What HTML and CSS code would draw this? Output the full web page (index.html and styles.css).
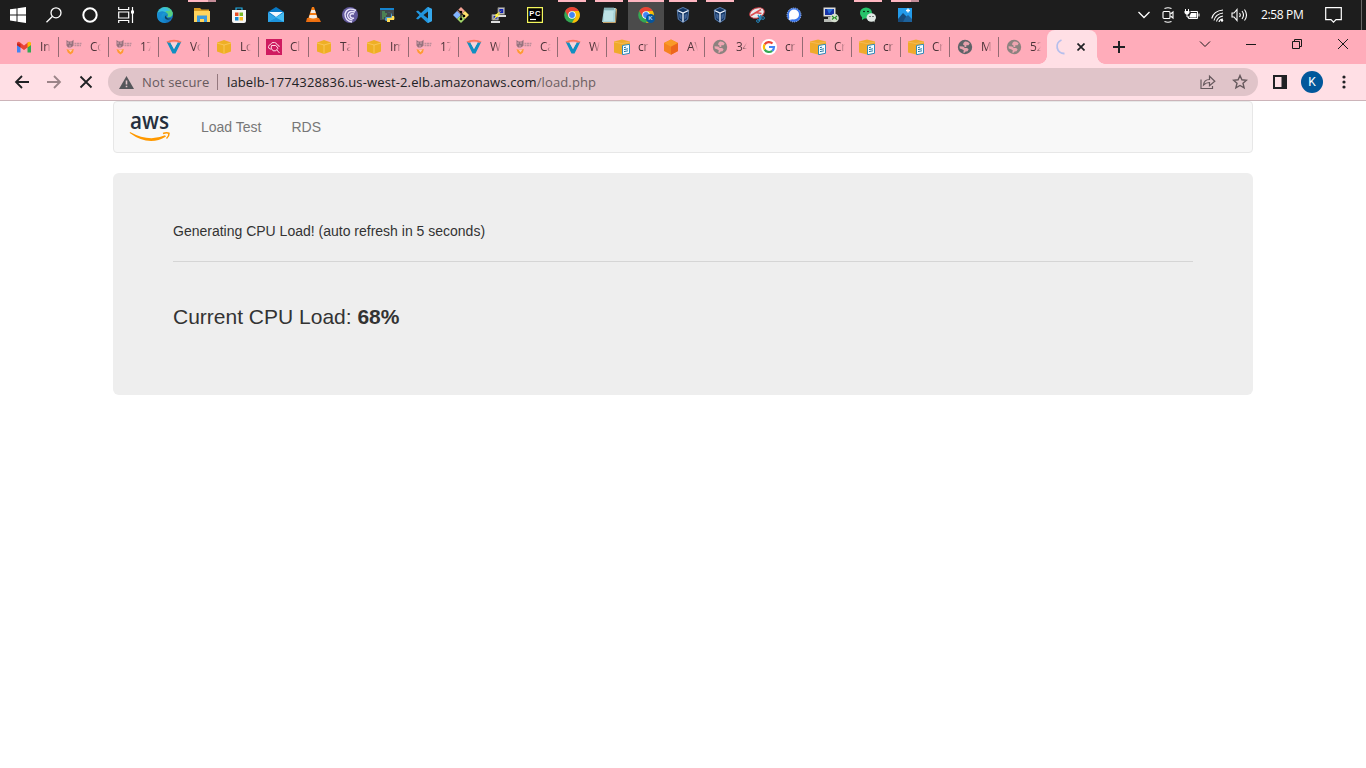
FILE: index.html
```html
<!DOCTYPE html>
<html lang="en">
<head>
<meta charset="utf-8">
<title>Load Test</title>
<link rel="stylesheet" href="styles.css">
</head>
<body>
<svg class="sprite" aria-hidden="true">
  <symbol id="gmail" viewBox="0 0 16 16"><path d="M1 4v9.500h3.500V7z" fill="#4285f4"/><path d="M15 4v9.500h-3.500V7z" fill="#34a853"/><path d="M1 4.200Q1.200 2 3.500 3L8 6.500 12.500 3 15 4v2L8 11 1 6z" fill="#ea4335"/><path d="M11.500 3.800c1.500-2 3.500-1 3.500.8v1.500l-3.500 2.500z" fill="#fbbc04"/><path d="M1 4.600v1.700l3.500 2.300V5z" fill="#c5221f"/></symbol>
  <symbol id="fox" viewBox="0 0 16 16"><g opacity=".75"><path d="M.5 1l2 1.500h3L7.500.8v6L5 8.500H2L.5 6.500z" fill="#74606b"/><path d="M2 3v2M5 3v2M3 7h2" stroke="#c6a3ae"/><path d="M8.500 4.500H16M8.500 6.500h6.500" stroke="#a98590" stroke-width="1.500" stroke-dasharray="2 .5"/></g><path d="M.5 10l1.700.8h3.200l2.400-.8-.8 3.500-2.500 2-2.700-2z" fill="#ff9a32"/><path d="M2.700 11h3.500l-1.700 2.200z" fill="#ffcdb1"/></symbol>
  <symbol id="vee" viewBox="0 0 16 16"><path d="M.8 3l3.700.5L8 10l3.500-6.500 3.700-.5-5.700 11.500h-3z" fill="#118fc1"/><path d="M4.300 3.500h7.400L8 10z" fill="#f3d5da"/><path d="M.2 2.700q7.800-3.700 15.600 0l-2.500 1q-5-2.300-10.600 0z" fill="#fa765d"/></symbol>
  <symbol id="cube" viewBox="0 0 16 16"><path d="M1 3.500L8 1l7 2.500v9L8 15l-7-2.500z" fill="#efaf25"/><path d="M1 4l7 2 7-2M8 6v9" fill="none" stroke="#ffd477" stroke-width=".6"/></symbol>
  <symbol id="cubedoc" viewBox="0 0 16 16"><path d="M0 2.500L8 .5l8 2v11L8 15.500l-8-2z" fill="#efaa2b"/><path d="M0 3l8 1.500L16 3" stroke="#f7c266" fill="none" stroke-width=".7"/><path d="M8.500 6.500l7-1.200v9L8.500 15.700z" fill="#f5fbff" stroke="#2f8bba"/><path d="M10 8.600l2-.4M10 10.600l4-.8M10 12.600l4-.8" stroke="#2477a4"/></symbol>
  <symbol id="cloud9" viewBox="0 0 16 16"><path d="M0 0h16v16H0z" fill="#cf1b60"/><path d="M5.500 10H4.200Q2 9.500 2.500 7.500 2.700 6 4.200 5.800 5.500 2.800 8.500 3.500q2.200.3 2.600 2.300Q13.500 6 13.200 8M5.500 6.500h4.300L12 9.200l-2.200 2.600H7L5.200 9.200zM10.700 10.800L13.500 14" fill="none" stroke="#ffd5e2"/></symbol>
  <symbol id="orange" viewBox="0 0 16 16"><path d="M8 .5l7 3.500v8l-7 3.700L1 12V4z" fill="#f58220"/><path d="M1 4l7 3.800L15 4 8 .5z" fill="#f99a26"/><path d="M8 7.800L15 4v8l-7 3.700z" fill="#ed651b"/></symbol>
  <symbol id="google" viewBox="0 0 16 16"><circle cx="8" cy="8" r="8" fill="#fff"/><g fill="none" stroke-width="2.200"><path d="M11.500 4.600A5 5 0 003.700 5.400" stroke="#ea4335"/><path d="M3.700 5.400a5 5 0 000 5.200" stroke="#fbbc04"/><path d="M3.700 10.600a5 5 0 007.500 1.200" stroke="#34a853"/><path d="M11.200 11.800A5 5 0 0013 8H8" stroke="#4285f4"/></g></symbol>
  <symbol id="globe" viewBox="0 0 16 16"><circle cx="8" cy="8" r="7.200" fill="currentColor"/><path d="M8 2.600Q11 2.300 12.700 4.400L11.500 6.200H9.300V8H7.500V6.500L6 5.600l.6-1.900zM2.500 7.200l3.700.2 1.600 1.700 2.300-.1 1.500 1.200-1 2-2 .4-1 1.200H6.300l.5-2.600L5 10.200l-2.200-.8z" fill="#ffacba" opacity=".85"/></symbol>
  <symbol id="chrome" viewBox="0 0 16 16"><circle cx="8" cy="8" r="7.800" fill="#34a853"/><path d="M1.200 4.100A7.800 7.800 0 0114.800 4.100H8L4.600 10z" fill="#ea4335"/><path d="M14.800 4.100A7.800 7.800 0 018 15.800L11.500 10 9 4.100z" fill="#fbbc04"/><circle cx="8" cy="8" r="3.800" fill="#fff"/><circle cx="8" cy="8" r="2.900" fill="#4285f4"/></symbol>
  <symbol id="vbox" viewBox="0 0 16 16"><path d="M8 0l6.200 3-1 9.500L8 16l-5.200-3.500L1.800 3z" fill="#123563"/><path d="M2.500 3.500L8 6l5.500-2.500M8 6v9" stroke="#f0f6ff" stroke-width="1.300" fill="none"/><path d="M2.300 3L8 .5 13.700 3l-1 9.200L8 15.400l-4.700-3.200z" stroke="#7e9bc4" stroke-width=".7" fill="none"/><path d="M4 6.500l2.500 1.300v4.700L4.500 11zM12 6.500L9.500 7.800v4.700l2-1.500z" fill="#41659a"/></symbol>
  <linearGradient id="edgefill" x2="1" y2="1"><stop stop-color="#32c5df"/><stop offset=".55" stop-color="#158acc"/><stop offset="1" stop-color="#1564b7"/></linearGradient>
</svg>

<header class="taskbar">
  <div class="system">
    <span><svg width="16" height="16" viewBox="0 0 16 16" fill="#fff"><path d="M0 2.300l6.500-.9v6H0zM7.500 1.200L16 0v7.400H7.500zM0 8.500h6.500v6L0 13.600zM7.500 8.500H16V16l-8.500-1.200z"/></svg></span>
    <span><svg width="16" height="16" viewBox="0 0 16 16" fill="none" stroke="#fff" stroke-width="1.300"><circle cx="10" cy="5.800" r="5"/><path d="M6.300 9.500L.5 15.300"/></svg></span>
    <span><svg width="16" height="16" viewBox="0 0 16 16"><circle cx="8" cy="8" r="6.700" fill="none" stroke="#fff" stroke-width="2"/></svg></span>
    <span><svg width="17" height="16" viewBox="0 0 17 16" fill="none" stroke="#fff" stroke-width="1.200"><path d="M.7 0v2.500h10V0M.7 16v-2.500h10V16M.7 5h10v6H.7zM14.500 0v16"/><path d="M13 3.500h3v3h-3z" fill="#fff" stroke="none"/></svg></span>
  </div>
  <div class="apps">
    <span><svg class="app" viewBox="0 0 16 16"><circle cx="8" cy="8" r="8" fill="url(#edgefill)"/><path d="M1 5C4-1 13-2 15.700 5.500 16.400 9 13.500 11 10 10q2-2 0-4Q6 3 1 5z" fill="#57cf82"/><path d="M1 5Q5-1 10 1 12 2 13 4 10 3 8 5 4 4 1 5z" fill="#38bde0"/><path d="M.5 6q5-3.500 9 0Q4 5 4.500 11 6 15 10 15.700 0 17 .2 8z" fill="#178bd1"/><path d="M9.300 8Q8.500 9.500 10 11q2 1 5 0-3 2.500-6 1.300Q6.500 10.500 9.300 8z" fill="#123e58"/></svg></span>
    <span class="running stacked"><svg class="app" viewBox="0 0 16 16"><path d="M0 1h6l1.500 1.500H15V15H0z" fill="#d99b23"/><path d="M0 4h16v11H0z" fill="#ffd45d"/><path d="M3 15V8.500h10V15h-3v-3H6v3z" fill="#3c9bdc"/></svg></span>
    <span><svg class="app" viewBox="0 0 16 16"><path d="M5 4V1h6v3" fill="none" stroke="#22afe8" stroke-width="1.200"/><path d="M1 3h14v11q0 2-2 2H3q-2 0-2-2z" fill="#f5f5f5"/><path d="M4 5.500h3.500V9H4z" fill="#e84d25"/><path d="M8.500 5.500H12V9H8.500z" fill="#78b928"/><path d="M4 10h3.500v3.500H4z" fill="#1689d1"/><path d="M8.500 10H12v3.500H8.500z" fill="#f7b925"/></svg></span>
    <span><svg class="app" viewBox="0 0 16 16"><path d="M0 5l8-5 8 5v10H0z" fill="#0878c5"/><path d="M1 5h14L8 10z" fill="#f1f8ff"/><path d="M0 5.500l8 5 8-5V15H0z" fill="#31a4e6"/><path d="M16 5.500V15H0z" fill="#45bdf2"/><path d="M0 15l8-4.500L16 15z" fill="#1c93dc"/></svg></span>
    <span><svg class="app" viewBox="0 0 16 16"><path d="M2 11h12l2 4H1z" fill="#ed6e10"/><path d="M7 0h2l4 12q-5 3-10 0z" fill="#f47c14"/><path d="M6.300 3h3.500l1 3H5.400zM4.700 8h6.700l.8 2.500q-4 2-8.300 0z" fill="#f3eee8"/></svg></span>
    <span><svg class="app" viewBox="0 0 16 16"><circle cx="8" cy="8" r="8" fill="#62599b"/><path d="M14 3.500Q5-.5 3 7q0 7 7 8M13 5Q7 3 5.500 8q0 4 5 5M12 7Q8 6 8 9q1 3 4 2" fill="none" stroke="#e8e3fa" stroke-width="1.400"/></svg></span>
    <span><svg class="app" viewBox="0 0 16 16"><path d="M1 1h14v12H1z" fill="#41494d"/><path d="M1 1h14v2H1z" fill="#1684cf"/><path d="M3 5h3M3 7h5M3 9h4M3 11h2" stroke="#58b95b"/><path d="M8 6h4v4H7q-1 0-1 3 0 1 2 1v-3h5V8q0-3-5-2" fill="#4e9cca"/><path d="M13 9h2q1 2 0 4h-4v2H8v-4h4q1 0 1-2z" fill="#ffdc55"/></svg></span>
    <span><svg class="app" viewBox="0 0 16 16"><path d="M11.500 0L16 2v12l-4.500 2L5 10l-3 2.500L0 11.500 3.500 8 0 4.500l2-1L5 6zM12 4.500L7.500 8l4.500 3.500z" fill="#2196df" fill-rule="evenodd"/><path d="M12 0l4 2v12l-4 2z" fill="#35a8ec"/></svg></span>
    <span><svg class="app" viewBox="0 0 16 16"><path d="M8 0l4 4-4 4-4-4z" fill="#f1a093"/><path d="M0 8l4-4 4 4-4 4z" fill="#82b4ff"/><path d="M8 8l4-4 4 4-4 4z" fill="#ffe16d"/><path d="M4 12l4-4 4 4-4 4z" fill="#a3d86b"/><path d="M5 3l6 6M8 5v7" stroke="#262626" stroke-width="1.200"/><circle cx="8" cy="5" r="1.300"/><circle cx="11" cy="9" r="1.300"/><circle cx="8" cy="12" r="1.300"/></svg></span>
    <span><svg class="app" viewBox="0 0 16 16"><path d="M8 .7h6.500v6.500H8zM2 7.500h6.500V13H2z" fill="#ccc" stroke="#777"/><path d="M9.300 2h4v4h-4zM3.500 8.800h4v3h-4z" fill="#1423b6"/><path d="M7 8h9v2H8M1 14h9v2H1z" fill="#ddd"/><path d="M12.500 3L7.500 7.500h3L3 13l3-4.500H4z" fill="#fff13b"/></svg></span>
    <span><svg class="app" viewBox="0 0 16 16"><path d="M.6.600h14.800v14.800H.6z" fill="#000" stroke="#f3f65c" stroke-width="1.200"/><text x="2.300" y="9" textLength="11" class="pc">PC</text><path d="M3 12.500h6" stroke="#fff" stroke-width="1.200"/></svg></span>
    <span class="running"><svg class="app"><use href="#chrome"/></svg></span>
    <span class="running"><svg class="app" viewBox="0 0 16 16"><path d="M3 1h12l-1 14H1z" fill="#a7d3d9"/><path d="M14 2h1.500l-1 13.500H2" stroke="#c5a169" fill="none"/><path d="M3.500 5h9M3 7h9M3 9h9M3 11h9M3 13h9" stroke="#e7ffff" stroke-width=".7"/><path d="M4 0v3M6 0v3M8 0v3M10 0v3M12 0v3" stroke="#6c8e93"/></svg></span>
    <span class="running current"><svg class="app"><use href="#chrome"/></svg><b>K</b></span>
    <span class="running"><svg class="app"><use href="#vbox"/></svg></span>
    <span class="running"><svg class="app"><use href="#vbox"/></svg></span>
    <span><svg class="app" viewBox="0 0 16 16"><ellipse cx="8" cy="6" rx="7.500" ry="5" transform="rotate(-20 8 6)" fill="#e9eaec" stroke="#c53941"/><path d="M2 8.500l10-6M6.500 5.500l6 1" stroke="#df4b4f" stroke-width="1.500"/><path d="M9 8l3 5M12 8l-2 6" stroke="#2888bb" stroke-width="1.500"/><circle cx="9" cy="14" r="1.400" fill="none" stroke="#2483b8"/><circle cx="14" cy="11" r="1.400" fill="none" stroke="#2483b8"/></svg></span>
    <span><svg class="app" viewBox="0 0 16 16"><circle cx="8" cy="8" r="7" fill="#3976ec"/><circle cx="8" cy="8" r="7" fill="none" stroke="#a8c4ff" stroke-dasharray="1 1"/><circle cx="8" cy="7.500" r="5" fill="#fff"/><path d="M3.500 8L3 13l5-1z" fill="#fff"/></svg></span>
    <span><svg class="app" viewBox="0 0 16 16"><path d="M.5.500h12v9H.5z" fill="#ddd"/><path d="M2 2h9v6H2z" fill="#1732a6"/><path d="M4 2h6L6 7z" fill="#2770d8"/><path d="M5 10h4v2h3v3H1v-3h4z" fill="#b8bbb6"/><circle cx="11.500" cy="11" r="4.300" fill="#d5dfcf"/><path d="M9 9l2 1.700L9 12.500M14 9l-2 1.700 2 2" stroke="#2b912c" fill="none" stroke-width="1.200"/></svg></span>
    <span class="running"><svg class="app" viewBox="0 0 16 16"><ellipse cx="6" cy="6" rx="6" ry="5.500" fill="#27c36a"/><path d="M2 10v3l3-2z" fill="#27c36a"/><ellipse cx="11.300" cy="10.500" rx="4.700" ry="4.200" fill="#e1e9e5"/><path d="M13 13.500l1.500 2v-3z" fill="#e1e9e5"/><circle cx="4" cy="4.500" r=".8"/><circle cx="8" cy="4.500" r=".8"/><circle cx="10" cy="9.500" r=".6"/><circle cx="13" cy="9.500" r=".6"/></svg></span>
    <span class="running stacked"><svg class="app" viewBox="0 0 16 16"><path d="M1 1h14v14H1z" fill="#239bea"/><path d="M1 12l5-6 9 9H1z" fill="#174b7a"/><path d="M8 11l3-3 4 4v3H6z" fill="#1d629c"/><path d="M11 1.500v4M9 3.500h4" stroke="#fff" stroke-width="1.400"/></svg></span>
  </div>
  <div class="tray">
    <svg width="12" height="8" viewBox="0 0 12 8"><path d="M.5 1l5.500 5.500L11.500 1" fill="none" stroke="#fff" stroke-width="1.300"/></svg>
    <svg class="meet" width="12" height="16" viewBox="0 0 12 16" fill="none" stroke="#fff" stroke-width="1.100"><rect x="1" y="4.500" width="7" height="7" rx="1"/><path d="M8.500 7l2.500-2v6L8.500 9M2.500 1.500q3.500-1.400 7 0M2.500 14.500q3.500 1.400 7 0"/></svg>
    <svg class="battery" width="16" height="12" viewBox="0 0 16 12" stroke="#fff" fill="none"><path d="M6.500 2.500h7v7h-9V7.500M15 4.500v3M1.500 0v2.500M4.500 0v2.500M3 5v3h1.500"/><path d="M.5 2h5v2L4 5.500H2L.5 4z" fill="#fff" stroke="none"/><path d="M7 4h5.500v4.500h-7V7z" fill="#fff" stroke="none"/></svg>
    <svg class="wifi" width="13" height="13" viewBox="0 0 13 13" fill="none" stroke="#fff" stroke-width="1.100"><path d="M.7 9.500Q2.500 2 12 1M3 11.500Q4.500 5 12 4M5.500 12.500Q6.500 8 12 7M8 13Q8.500 10.300 12 10"/><circle cx="11" cy="11.500" r="1.200" fill="#fff" stroke="none"/></svg>
    <svg class="sound" width="17" height="14" viewBox="0 0 17 14" fill="none" stroke="#fff" stroke-width="1.100"><path d="M1 5h2l3-3.500v11L3 9H1zM8.500 5q1.500 2 0 4M11 3q3 4 0 8M13.500 1.500q4 5.500 0 11"/></svg>
    <time>2:58 PM</time>
    <svg class="note" width="17" height="16" viewBox="0 0 17 16" fill="none" stroke="#fff" stroke-width="1.200"><path d="M.7.700h15.600v12H11L8.500 15.200 6 12.700H.7z"/></svg>
    <i></i>
  </div>
</header>

<nav class="tabs">
  <div class="tab first"><svg><use href="#gmail"/></svg><span>In</span></div>
  <div class="tab"><svg><use href="#fox"/></svg><span>Co</span></div>
  <div class="tab"><svg><use href="#fox"/></svg><span>17</span></div>
  <div class="tab"><svg><use href="#vee"/></svg><span>Vo</span></div>
  <div class="tab"><svg><use href="#cube"/></svg><span>Lo</span></div>
  <div class="tab"><svg><use href="#cloud9"/></svg><span>Cl</span></div>
  <div class="tab"><svg><use href="#cube"/></svg><span>Ta</span></div>
  <div class="tab"><svg><use href="#cube"/></svg><span>Im</span></div>
  <div class="tab"><svg><use href="#fox"/></svg><span>17</span></div>
  <div class="tab"><svg><use href="#vee"/></svg><span>W</span></div>
  <div class="tab narrow"><svg><use href="#fox"/></svg><span>Ca</span></div>
  <div class="tab narrow"><svg><use href="#vee"/></svg><span>W</span></div>
  <div class="tab narrow"><svg><use href="#cubedoc"/></svg><span>cr</span></div>
  <div class="tab narrow"><svg><use href="#orange"/></svg><span>AV</span></div>
  <div class="tab narrow"><svg class="pale"><use href="#globe"/></svg><span>34</span></div>
  <div class="tab narrow"><svg><use href="#google"/></svg><span>cr</span></div>
  <div class="tab narrow"><svg><use href="#cubedoc"/></svg><span>Cr</span></div>
  <div class="tab narrow"><svg><use href="#cubedoc"/></svg><span>cr</span></div>
  <div class="tab narrow"><svg><use href="#cubedoc"/></svg><span>Cr</span></div>
  <div class="tab narrow"><svg><use href="#globe"/></svg><span>M</span></div>
  <div class="tab narrow last"><svg class="pale"><use href="#globe"/></svg><span>52</span></div>
  <div class="tab active">
    <svg viewBox="0 0 16 16"><path d="M7.500 1A7 7 0 0010.500 14.500" fill="none" stroke="#b5bfed" stroke-width="1.800"/></svg>
    <svg class="close" viewBox="0 0 8 8"><path d="M.5.500l7 7m0-7l-7 7" stroke="#202124" stroke-width="1.700"/></svg>
  </div>
  <svg class="plus" viewBox="0 0 12 12"><path d="M6 0v12M0 6h12" stroke="#202124" stroke-width="2"/></svg>
  <div class="window-buttons">
    <svg viewBox="0 0 12 12"><path d="M1 3.500l5 5 5-5" /></svg>
    <svg viewBox="0 0 12 12"><path d="M1 6.500h10"/></svg>
    <svg viewBox="0 0 12 12"><path d="M1.500 3.500h7v7h-7zM3.500 3.500v-2h7v7h-2"/></svg>
    <svg viewBox="0 0 12 12"><path d="M1 1l10 10m0-10L1 11"/></svg>
  </div>
</nav>

<div class="toolbar">
  <div class="controls">
    <svg viewBox="0 0 16 16"><path d="M15 8H2m6-6L2 8l6 6"/></svg>
    <svg class="disabled" viewBox="0 0 16 16"><path d="M1 8h13M8 2l6 6-6 6"/></svg>
    <svg viewBox="0 0 16 16"><path d="M2.500 2.500l11 11m0-11l-11 11"/></svg>
  </div>
  <div class="address">
    <svg class="warning" width="15" height="13" viewBox="0 0 15 13"><path d="M7.500 0L15 13H0z" fill="#54565a"/><path d="M7.500 4.500v4m0 1.200v1.600" stroke="#e0c4c9" stroke-width="1.600"/></svg>
    <span class="security">Not secure</span><i></i><span class="url">labelb-1774328836.us-west-2.elb.amazonaws.com<em>/load.php</em></span>
    <svg class="share" width="16" height="16" viewBox="0 0 16 16" fill="none" stroke="#66595d" stroke-width="1.200"><path d="M1 5.500v9h11.500V12M3.500 11q.5-5.500 6-5.500V2.200l5.300 5-5.300 4.500V8.500Q6 8.500 3.500 11z"/></svg>
    <svg class="star" width="16" height="16" viewBox="0 0 16 16" fill="none" stroke="#66595d" stroke-width="1.400"><path d="M8 1.500l1.900 4.300 4.600.4-3.500 3 1.100 4.700L8 11.500l-4.100 2.400L5 9.200l-3.500-3 4.600-.4z"/></svg>
  </div>
  <svg class="panel" width="14" height="14" viewBox="0 0 14 14"><path d="M1 1h12v12H1z" fill="none" stroke="#202124" stroke-width="2"/><path d="M8.500 0H14v14H8.500z" fill="#202124"/></svg>
  <span class="avatar">K</span>
  <svg class="more" width="4" height="14" viewBox="0 0 4 14" fill="#202124"><circle cx="2" cy="2" r="1.600"/><circle cx="2" cy="7" r="1.600"/><circle cx="2" cy="12" r="1.600"/></svg>
</div>

<main class="container">
  <nav class="navbar">
    <svg class="aws" width="42" height="28" viewBox="0 0 42 28"><text x="1" y="16" textLength="39" lengthAdjust="spacingAndGlyphs">aws</text><path d="M1 19Q20 29.500 36 22.300l1 1.200Q20 34 .7 20z" fill="#ff9900"/><path d="M34 20.500q3.500-1.200 6-.3.200 3-2.500 5.300" fill="none" stroke="#ff9900" stroke-width="1.500"/></svg>
    <a>Load Test</a><a>RDS</a>
  </nav>
  <section class="jumbotron">
    <div class="status">Generating CPU Load! (auto refresh in 5 seconds)</div>
    <hr>
    <div class="load">Current CPU Load: <b>68%</b></div>
  </section>
</main>
</body>
</html>
```
FILE: styles.css
```css
* { box-sizing: border-box; }
body { margin: 0; background: #fff; font-family: "Liberation Sans", Arial, sans-serif; font-size: 14px; line-height: 20px; color: #333; overflow: hidden; }
svg { display: block; flex: none; }
.sprite { position: absolute; width: 0; height: 0; }

.taskbar { display: flex; height: 30px; background: #1d1d1d; }
.system, .apps { display: flex; }
.system span { display: flex; width: 36px; height: 30px; align-items: center; justify-content: center; }
.apps { padding-left: 3px; }
.apps span { position: relative; display: flex; width: 37px; height: 30px; padding-left: 10px; align-items: center; }
.app { width: 16px; height: 16px; }
.pc { font: bold 7.5px "Liberation Sans", sans-serif; fill: #fff; }
.running::before { content: ""; position: absolute; top: 0; left: 4px; width: 28px; height: 2px; background: #ffb6c1; }
.stacked::before { background: linear-gradient(90deg, #ffb6c1 20px, #c48c98 20px); }
.current { background: linear-gradient(90deg, #4b4b4b 36px, transparent 36px); }
.current::before { left: 0; width: 36px; }
.current b { position: absolute; left: 18px; top: 14px; width: 9px; height: 9px; border-radius: 50%; background: #07559b; color: #bcd8ef; font-size: 6px; line-height: 9px; text-align: center; }
.tray { display: flex; align-items: center; margin-left: auto; color: #fff; font-family: "Open Sans", "Noto Sans", sans-serif; font-size: 12px; }
.meet { margin-left: 12px; }
.battery { margin-left: 10px; }
.wifi { margin-left: 11px; }
.sound { margin-left: 7px; }
.tray time { width: 43px; margin-left: 13px; letter-spacing: -.35px; white-space: nowrap; }
.note { margin-left: 21px; }
.tray i { width: 1px; height: 30px; margin-left: 19px; margin-right: 4px; background: #686868; }

.tabs { display: flex; height: 34px; padding-left: 8px; background: #ffacba; }
.tab { display: flex; align-items: center; width: 50px; height: 34px; padding-left: 7px; background: linear-gradient(#936b73, #936b73) right 7px / 1px 20px no-repeat; }
.tab svg { width: 16px; height: 16px; color: #5f6368; }
.tab svg.pale { color: #8c827f; }
.tab span { width: 15px; margin-left: 8px; font: 12px/20px "Open Sans", "Noto Sans", sans-serif; letter-spacing: -.2px; color: #4b3338; white-space: nowrap; -webkit-mask-image: linear-gradient(90deg, #000 5px, transparent 11px); mask-image: linear-gradient(90deg, #000 5px, transparent 11px); }
.first { width: 51px; padding-left: 8px; }
.narrow { width: 49px; }
.last { width: 48px; background: none; }
.active { position: relative; width: 50px; border-radius: 8px 8px 0 0; background: #ffdfe5; }
.active::before, .active::after { content: ""; position: absolute; bottom: 0; width: 8px; height: 8px; }
.active::before { right: 100%; background: radial-gradient(circle at 0 0, transparent 7.5px, #ffdfe5 8px); }
.active::after { left: 100%; background: radial-gradient(circle at 100% 0, transparent 7.5px, #ffdfe5 8px); }
.active .close { width: 8px; height: 8px; margin-left: 7px; }
.plus { width: 12px; height: 12px; margin: 11px 0 0 16px; }
.window-buttons { display: flex; gap: 34px; margin: 8px 17px 0 auto; }
.window-buttons svg { width: 12px; height: 12px; fill: none; stroke: #191919; stroke-width: 1; }

.toolbar { display: flex; align-items: center; height: 37px; padding: 0 20px 0 14px; border-bottom: 1px solid #ccb4b9; background: #ffdfe5; }
.controls { display: flex; gap: 16px; }
.controls svg { width: 16px; height: 16px; fill: none; stroke: #202124; stroke-width: 1.8; }
.controls .disabled { stroke: #9b8488; }
.address { display: flex; align-items: center; width: 1150px; height: 28px; margin-left: 14px; padding: 0 10px 0 11px; border-radius: 14px; background: #e0c4c9; font-family: "Open Sans", "Noto Sans", sans-serif; font-size: 13px; white-space: nowrap; }
.security { width: 75px; margin-left: 8px; color: #67595d; letter-spacing: .15px; }
.address i { width: 1px; height: 16px; margin-right: 9px; background: #94787e; }
.url { color: #202124; letter-spacing: .13px; }
.url em { color: #6b5e61; font-style: normal; }
.share { margin-left: auto; }
.star { margin-left: 16px; }
.panel { margin-left: 15px; }
.avatar { width: 22px; height: 22px; margin-left: 14px; border-radius: 50%; background: #01579b; color: #fff; font: 12px/22px Roboto, sans-serif; text-align: center; }
.more { margin-left: auto; }

.container { width: 1140px; margin: 0 auto; }
.navbar { display: flex; align-items: center; height: 52px; padding-left: 15px; border: 1px solid #e7e7e7; border-radius: 4px; background: #f8f8f8; color: #777; }
.aws text { font: 600 22.5px "Open Sans", sans-serif; fill: #252f3e; }
.navbar a { margin-left: 30px; }
.jumbotron { height: 222px; margin-top: 20px; padding: 48px 60px; border-radius: 6px; background: #eee; }
.jumbotron hr { height: 1px; margin: 20px 0; border: 0; background: #d5d5d5; }
.load { margin-top: 40px; font-size: 21px; line-height: 30px; }
```
